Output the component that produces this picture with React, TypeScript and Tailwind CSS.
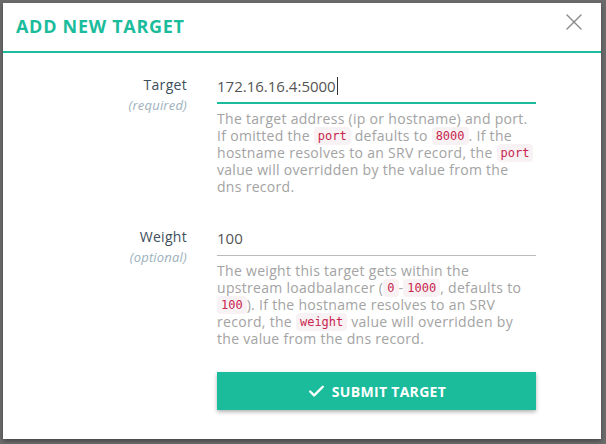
import React from "react";
import { Check, X } from "lucide-react";

const Code: React.FC<{ children: React.ReactNode }> = ({ children }) => (
  <code className="rounded-[4px] bg-[#f9f2f4] px-[4px] py-[2px] align-[1px] font-['DejaVu_Sans_Mono',monospace] text-[12px] leading-none tracking-normal text-[#c7254e]">
    {children}
  </code>
);

interface FieldProps {
  label: string;
  hint: string;
  value: string;
  active?: boolean;
  help: React.ReactNode;
}

const Field: React.FC<FieldProps> = ({ label, hint, value, active, help }) => (
  <div className="flex">
    <div className="w-[169px] shrink-0 pt-[5px] text-right">
      <div className="text-[14px] leading-[20px] tracking-[0.3px] text-[#3e4f5b]">{label}</div>
      <div className="text-[13px] italic leading-[20px] tracking-[0.2px] text-[#9db0bc]">{hint}</div>
    </div>
    <div className="ml-[30px] w-[319px]">
      <div
        className={
          active
            ? "flex h-[34px] items-center border-b-2 border-[#1abc9c] text-[15px] text-[#555]"
            : "flex h-[34px] items-center border-b border-[#bbbbbb] text-[15px] text-[#555]"
        }
      >
        {value}
        {active && <span className="ml-[1px] h-[18px] w-px bg-[#333]" />}
      </div>
      <p className="mt-[6px] whitespace-nowrap text-[14px] leading-[17px] tracking-[0.3px] text-[#a3a3a3]">
        {help}
      </p>
    </div>
  </div>
);

export default function App() {
  return (
    <div className="min-h-[444px] w-[606px] bg-[#6b6b6b] p-[3px] pr-[5px] font-['Open_Sans',sans-serif]">
      <div className="bg-white shadow-[0_2px_4px_rgba(0,0,0,0.35)]">
        <div className="flex h-[50px] items-start justify-between border-b-2 border-[#1abc9c] pl-[13px] pr-[13px]">
          <h2 className="mt-[11px] text-[18px] font-bold leading-[24px] tracking-[0.7px] text-[#1abc9c]">
            ADD NEW TARGET
          </h2>
          <X className="mt-[5px] h-[28px] w-[28px] text-[#888]" strokeWidth={1.2} />
        </div>
        <div className="px-[15px] pb-[29px] pt-[17px]">
          <Field
            label="Target"
            hint="(required)"
            value="172.16.16.4:5000"
            active
            help={
              <>
                The target address (ip or hostname) and port.
                <br />
                If omitted the <Code>port</Code> defaults to <Code>8000</Code>. If the
                <br />
                hostname resolves to an SRV record, the <Code>port</Code>
                <br />
                value will overridden by the value from the
                <br />
                dns record.
              </>
            }
          />
          <div className="mt-[27px]">
            <Field
              label="Weight"
              hint="(optional)"
              value="100"
              help={
                <>
                  The weight this target gets within the
                  <br />
                  upstream loadbalancer (<Code>0</Code>-<Code>1000</Code>, defaults to
                  <br />
                  <Code>100</Code>). If the hostname resolves to an SRV
                  <br />
                  record, the <Code>weight</Code> value will overridden by
                  <br />
                  the value from the dns record.
                </>
              }
            />
          </div>
          <div className="ml-[199px] mt-[25px] w-[319px]">
            <button className="flex h-[38px] w-full items-center justify-center gap-[6px] bg-[#1abc9c] text-[14px] font-bold tracking-[0.3px] text-white shadow-[0_2px_4px_rgba(0,0,0,0.3)]">
              <Check className="h-[19px] w-[19px]" strokeWidth={3} />
              SUBMIT TARGET
            </button>
          </div>
        </div>
      </div>
    </div>
  );
}
